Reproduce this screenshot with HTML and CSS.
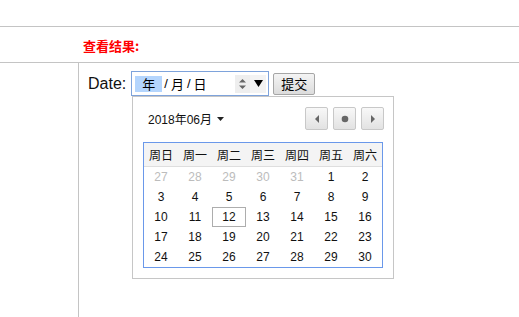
FILE: index.html
```html
<!DOCTYPE html>
<html>
<head>
<meta charset="utf-8">
<link rel="stylesheet" href="styles.css">
</head>
<body>
<div class="top"></div>
<div class="result-bar"><span class="result-title">查看结果:</span></div>
<div class="main">
  <div class="side"></div>
  <div class="content">
    <div class="form-row">
      <label class="date-label">Date:</label>
      <div class="date-input">
        <span class="seg seg-on">年</span><span class="sep">/</span><span class="seg">月</span><span class="sep">/</span><span class="seg">日</span>
        <span class="spin">
          <svg width="9" height="14" viewBox="0 0 9 14"><path d="M1 5.5 L4.5 2 L8 5.5 Z M1 8.5 L4.5 12 L8 8.5 Z" fill="#666"/></svg>
        </span>
        <span class="drop">
          <svg width="9" height="7" viewBox="0 0 9 7"><path d="M0 0 H9 L4.5 7 Z" fill="#000"/></svg>
        </span>
      </div>
      <button class="submit">提交</button>
    </div>
    <div class="picker">
      <div class="picker-head">
        <div class="month">2018年06月 <svg class="caret" width="7" height="4" viewBox="0 0 7 4"><path d="M0 0 H7 L3.5 4 Z" fill="#222"/></svg></div>
        <div class="nav">
          <button class="nav-btn"><svg width="6" height="8" viewBox="0 0 6 8"><path d="M5 0 V8 L1 4 Z" fill="#666"/></svg></button>
          <button class="nav-btn"><svg width="8" height="8" viewBox="0 0 8 8"><circle cx="4" cy="4" r="3.3" fill="#666"/></svg></button>
          <button class="nav-btn"><svg width="6" height="8" viewBox="0 0 6 8"><path d="M1 0 V8 L5 4 Z" fill="#666"/></svg></button>
        </div>
      </div>
      <div class="cal">
        <div class="week">
          <span>周日</span><span>周一</span><span>周二</span><span>周三</span><span>周四</span><span>周五</span><span>周六</span>
        </div>
        <div class="days">
          <span class="other">27</span><span class="other">28</span><span class="other">29</span><span class="other">30</span><span class="other">31</span><span>1</span><span>2</span>
          <span>3</span><span>4</span><span>5</span><span>6</span><span>7</span><span>8</span><span>9</span>
          <span>10</span><span>11</span><span class="today">12</span><span>13</span><span>14</span><span>15</span><span>16</span>
          <span>17</span><span>18</span><span>19</span><span>20</span><span>21</span><span>22</span><span>23</span>
          <span>24</span><span>25</span><span>26</span><span>27</span><span>28</span><span>29</span><span>30</span>
        </div>
      </div>
    </div>
  </div>
</div>
</body>
</html>
```

FILE: styles.css
```css
* { box-sizing: border-box; }
html, body { margin: 0; padding: 0; background: #fff; }
body {
  width: 519px;
  height: 317px;
  overflow: hidden;
  font-family: "Liberation Sans", Arial, "Noto Sans CJK SC", sans-serif;
  color: #000;
}
.top {
  height: 27px;
  border-bottom: 1px solid #c4c4c4;
}
.result-bar {
  height: 36px;
  border-bottom: 1px solid #c4c4c4;
  padding-left: 83px;
  display: flex;
  align-items: center;
}
.result-title {
  color: #ff0000;
  font-weight: bold;
  font-size: 13px;
  line-height: 14px;
  font-family: "Noto Sans CJK SC", sans-serif;
  margin-top: 2px;
}
.main {
  display: flex;
  height: 254px;
}
.side {
  width: 79px;
  border-right: 1px solid #c4c4c4;
  flex: none;
}
.content {
  position: relative;
  flex: 1;
  padding: 8px 0 0 9px;
}
.form-row {
  display: flex;
  align-items: center;
  height: 25px;
}
.date-label {
  font-size: 16px;
  line-height: 18px;
  margin-right: 5px;
  color: #111;
}
.date-input {
  width: 138px;
  height: 25px;
  border: 1px solid #7ea3db;
  display: flex;
  align-items: center;
  padding-left: 3px;
  font-family: "Noto Sans CJK SC", sans-serif;
  font-size: 13px;
  line-height: 16px;
}
.seg { padding: 0 1px; }
.seg-on {
  background: #b4d5fd;
  width: 27px;
  text-align: center;
  padding: 0;
}
.sep {
  font-family: "Liberation Sans", sans-serif;
  padding: 0 2px;
}
.spin {
  margin-left: auto;
  width: 15px;
  height: 18px;
  background: #eeeeee;
  display: flex;
  align-items: center;
  justify-content: center;
}
.drop {
  width: 16px;
  height: 18px;
  background: #f3f3f3;
  display: flex;
  align-items: center;
  justify-content: center;
  margin-right: 2px;
}
.submit {
  margin-left: 4px;
  width: 42px;
  height: 22px;
  border: 1px solid #a6a6a6;
  border-radius: 2px;
  background: linear-gradient(#f4f4f4, #dcdcdc);
  font-family: "Noto Sans CJK SC", sans-serif;
  font-size: 13px;
  line-height: 16px;
  padding: 0;
  color: #000;
}
.picker {
  position: absolute;
  left: 53px;
  top: 33px;
  width: 262px;
  height: 183px;
  border: 1px solid #c6c6c6;
  background: #fff;
  padding: 10px 9px 10px 10px;
}
.picker-head {
  display: flex;
  align-items: center;
  justify-content: space-between;
  height: 23px;
  margin-bottom: 12px;
}
.month {
  padding-left: 5px;
  font-size: 12px;
  font-family: "Liberation Sans", "Noto Sans CJK SC", sans-serif;
  display: flex;
  align-items: center;
  gap: 4px;
  color: #111;
}
.caret { margin-left: 1px; }
.nav { display: flex; gap: 5px; }
.nav-btn {
  width: 23px;
  height: 23px;
  padding: 0;
  border: 1px solid #c8c8c8;
  border-radius: 2px;
  background: linear-gradient(#f8f8f8, #e2e2e2);
  display: flex;
  align-items: center;
  justify-content: center;
}
.cal {
  width: 240px;
  border: 1px solid #6a98ea;
}
.week {
  display: grid;
  grid-template-columns: repeat(7, 34px);
  height: 24px;
  background: #f4f4f4;
  border-bottom: 1px solid #dedede;
  font-family: "Noto Sans CJK SC", sans-serif;
  font-size: 12px;
  align-items: center;
  text-align: center;
  color: #111;
}
.days {
  display: grid;
  grid-template-columns: repeat(7, 34px);
  grid-auto-rows: 20px;
  font-size: 12px;
  text-align: center;
  color: #111;
}
.days span {
  display: flex;
  align-items: center;
  justify-content: center;
}
.days .other { color: #bcbcbc; }
.days .today { border: 1px solid #adadad; }
```
